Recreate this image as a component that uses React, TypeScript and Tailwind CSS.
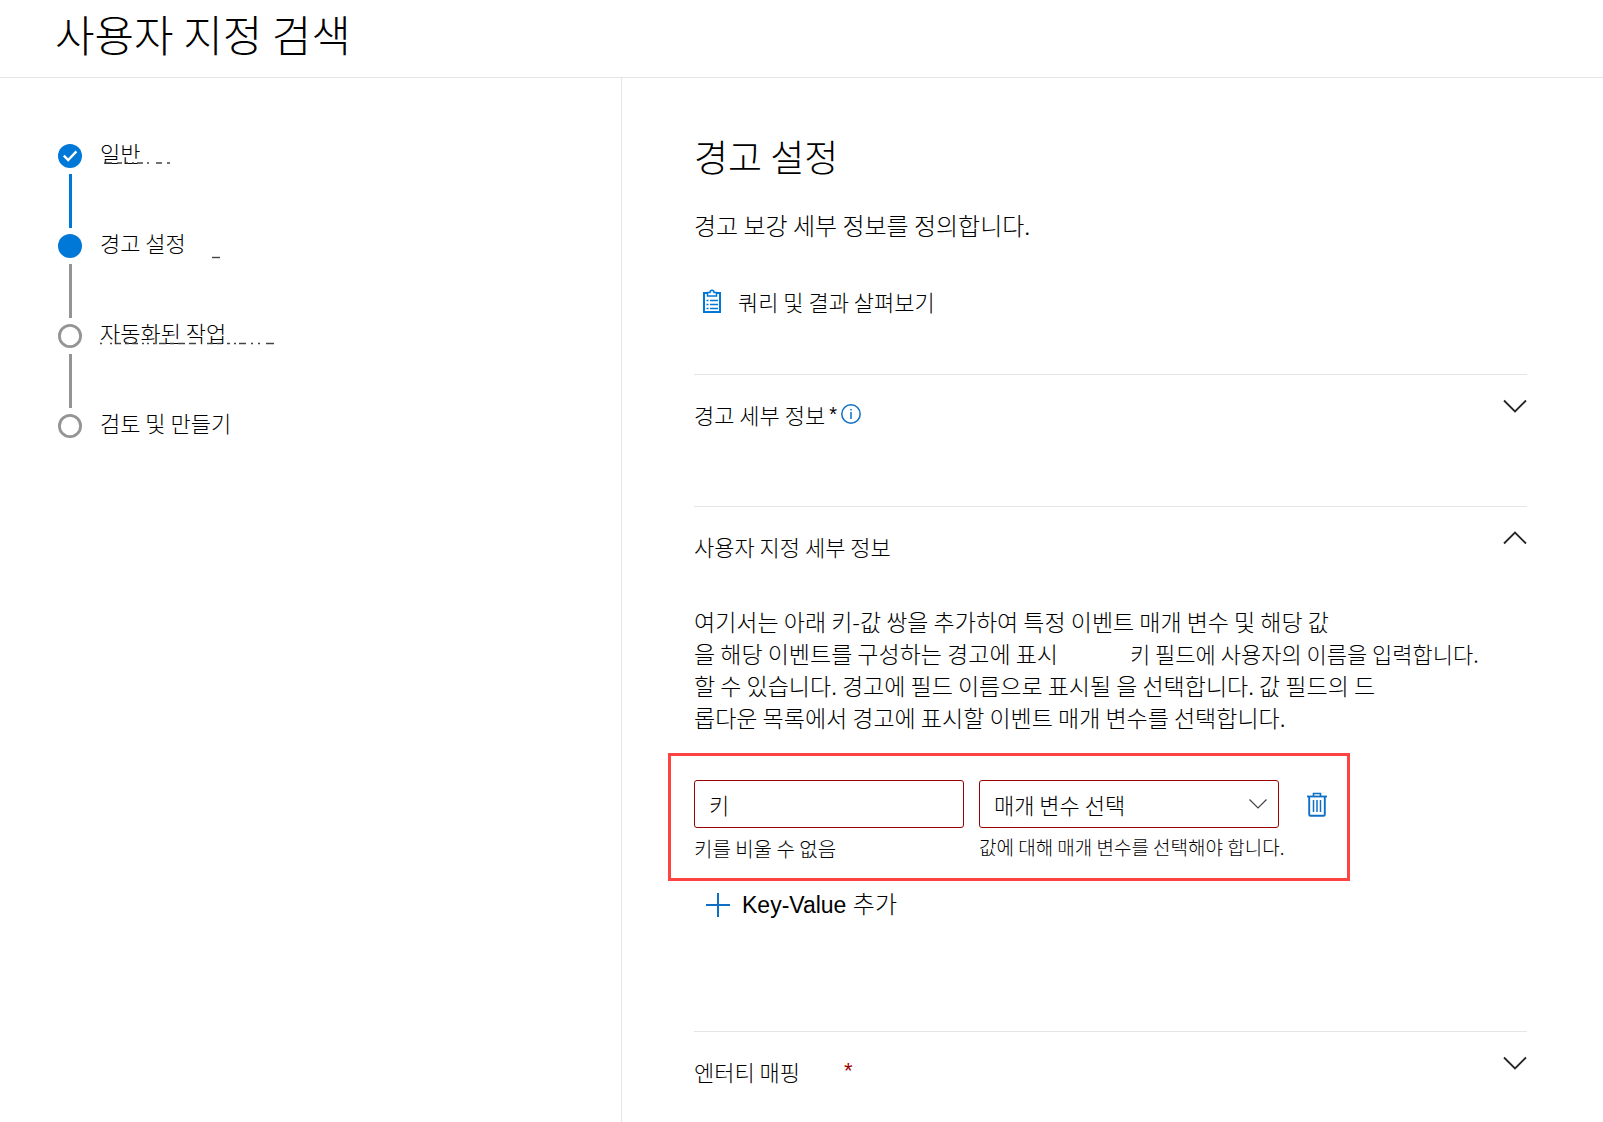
import { useState } from "react";
import type { ReactNode } from "react";

type StepState = "done" | "current" | "todo"

// marks: small strokes drawn under a label, relative to its top left corner
const steps: { label: string, state: StepState, marks?: string }[] = [
  { label: "일반", state: "done", marks: "M4 19h8M17 19h5M26 19h2M32 19h2M37 19h6M47 19h2M56 19h6M67 19h3" },
  { label: "경고 설정", state: "current", marks: "M112 23.500h8" },
  { label: "자동화된 작업", state: "todo", marks: "M0 19.500h2M10 19.500h2M16 19.500h5M25 19.500h4M32 19.500h6M42 19.500h2M47 19.500h2M53 19.500h2M59 19.500h7M70 19.500h4M78 19.500h7M89 19.500h7M107 19.500h6M117 19.500h5M127 19.500h3M134 19.500h2M139 19.500h7M151 19.500h2M158 19.500h2M166 19.500h8" },
  { label: "검토 및 만들기", state: "todo" },
]

function StepMarker({ state }: { state: StepState }) {
  return (
    <svg width="24" height="24" viewBox="0 0 24 24" fill="none" aria-hidden="true">
      {state === "todo" ? (
        <circle cx="12" cy="12" r="10.6" stroke="#949494" strokeWidth="2.8" />
      ) : (
        <circle cx="12" cy="12" r="12" fill="#0078d7" />
      )}
      {state === "done" && <path d="M5.8 11.6 10.2 16 18.4 7.4" stroke="#fff" strokeWidth="2.4" />}
    </svg>
  )
}

function Chevron({ up = false }: { up?: boolean }) {
  return (
    <svg width="24" height="14" viewBox="0 0 24 14" fill="none" stroke="#262626" strokeWidth="1.8" aria-hidden="true">
      <path d={up ? "M1 12.5 12 1.5 23 12.5" : "M1 1.5 12 12.5 23 1.5"} />
    </svg>
  )
}

function ClipboardIcon() {
  return (
    <svg width="20" height="25" viewBox="0 0 20 25" fill="none" stroke="#0078d7" aria-hidden="true">
      <path d="M5 4H2v19h16V4h-3" strokeWidth="2" />
      <path d="M5.500 7V3.500H8C8 2 8.800 1.200 10 1.200S12 2 12 3.500h2.500V7z" strokeWidth="1.500" />
      <path d="M8 11.500h8M8 15.500h8M8 19.500h8" strokeWidth="1.500" />
      <path d="M4.500 11.500h2M4.500 15.500h2M4.500 19.500h2" strokeWidth="1.500" />
    </svg>
  )
}

function InfoIcon() {
  return (
    <svg width="20" height="20" viewBox="0 0 20 20" fill="none" stroke="#0f6fc5" aria-hidden="true">
      <circle cx="10" cy="10" r="9.2" strokeWidth="1.5" />
      <path d="M10 8v7M10 5v1.600" strokeWidth="1.500" />
    </svg>
  )
}

function TrashIcon() {
  return (
    <svg width="20" height="25" viewBox="0 0 20 25" fill="none" stroke="#0f6fc5" aria-hidden="true">
      <path d="M0 4.500h20" strokeWidth="1.800" />
      <path d="M6.500 4V1.500h7V4" strokeWidth="1.600" />
      <path d="M2.200 5v17.500c0 .8.500 1.300 1.300 1.300h13c.8 0 1.300-.5 1.300-1.300V5" strokeWidth="1.900" />
      <path d="M6.500 8v12M10 8v12M13.500 8v12" strokeWidth="1.500" />
    </svg>
  )
}

type SectionProps = {
  title: ReactNode,
  open?: boolean,
  className?: string,
  children?: ReactNode,
}

function Section({ title, open = false, className, children }: SectionProps) {
  return (
    <section className={className}>
      <button type="button" aria-expanded={open} className="flex w-full justify-between border-t border-[#e5e5e5] pt-6 text-left">
        <span className="flex items-center text-[22px] leading-[30px]">{title}</span>
        <Chevron up={open} />
      </button>
      {children}
    </section>
  )
}

export default function App() {

  const [key, setKey] = useState("")

  return (
    <div className="flex min-h-screen flex-col bg-white font-['Noto_Sans_CJK_KR',sans-serif] font-light text-black">
      <header className="border-b border-[#e5e5e5] pt-0.5 pb-3 pl-[55px]">
        <h1 className="text-[43px] leading-[63px] font-light">사용자 지정 검색</h1>
      </header>
      <div className="flex grow">
        <nav className="w-[622px] shrink-0 border-r border-[#e5e5e5] pt-[66px] pl-[58px]">
          <ol>
            {steps.map(({ label, state, marks }, i) => (
              <li key={label} className="flex h-[90px] gap-[18px]">
                <div className="flex flex-col items-center">
                  <StepMarker state={state} />
                  {i < steps.length - 1 && (
                    <div className={state === "done" ? "my-1.5 w-[3px] grow bg-[#0078d7]" : "my-1.5 w-[3px] grow bg-[#949494]"} />
                  )}
                </div>
                <div className="grid items-start">
                  <span className="col-start-1 row-start-1 text-[22px] leading-4">{label}</span>
                  {marks && (
                    <svg className="col-start-1 row-start-1" width="180" height="26" viewBox="0 0 180 26" stroke="#444" strokeWidth="1.4" aria-hidden="true">
                      <path d={marks} />
                    </svg>
                  )}
                </div>
              </li>
            ))}
          </ol>
        </nav>

        <main className="grow pt-[51px] pr-[76px] pl-[72px]">
          <h2 className="text-[37px] leading-[54px] font-light">경고 설정</h2>
          <p className="pt-[21px] text-2xl leading-[42px]">경고 보강 세부 정보를 정의합니다.</p>
          <button type="button" className="mt-[33px] flex items-center gap-4 pl-2 text-[22px] leading-[44px]">
            <ClipboardIcon />
            쿼리 및 결과 살펴보기
          </button>

          <Section
            className="mt-[51px] h-[132px]"
            title={<>경고 세부 정보<span className="mx-1 font-['Liberation_Sans',sans-serif] text-xl">*</span><InfoIcon /></>}
          />

          <Section className="h-[525px]" title="사용자 지정 세부 정보" open>
            <div className="pt-11 text-[23px] leading-8">
              <p>여기서는 아래 키-값 쌍을 추가하여 특정 이벤트 매개 변수 및 해당 값</p>
              <p className="flex gap-[72px]">
                <span>을 해당 이벤트를 구성하는 경고에 표시</span>
                <span className="text-[22px]">키 필드에 사용자의 이름을 입력합니다.</span>
              </p>
              <p>할 수 있습니다. 경고에 필드 이름으로 표시될 을 선택합니다. 값 필드의 드</p>
              <p>롭다운 목록에서 경고에 표시할 이벤트 매개 변수를 선택합니다.</p>
            </div>

            <div className="mt-5 -ml-[26px] flex h-32 w-[682px] gap-[15px] border-[3px] border-[#ff4343] pt-6 pl-[23px]">
              <div className="w-[270px]">
                <input
                  type="text"
                  aria-label="키"
                  placeholder="키"
                  value={key}
                  onChange={e => setKey(e.currentTarget.value)}
                  className="h-12 w-full rounded-[3px] border border-[#990000] px-3.5 text-[22px] placeholder:text-black"
                />
                <p className="pt-1.5 text-xl leading-[30px]">키를 비울 수 없음</p>
              </div>
              <div className="w-[311px]">
                <div className="grid w-[300px] items-center">
                  <select aria-label="매개 변수" className="col-start-1 row-start-1 h-12 w-full appearance-none rounded-[3px] border border-[#990000] px-3.5 text-[22px]">
                    <option>매개 변수 선택</option>
                  </select>
                  <svg className="pointer-events-none col-start-1 row-start-1 mr-3 justify-self-end" width="18" height="10" viewBox="0 0 18 10" fill="none" stroke="#444" strokeWidth="1.2" aria-hidden="true">
                    <path d="M.5.5 9 9 17.5.5" />
                  </svg>
                </div>
                <p className="pt-1 text-[19px] leading-[30px] whitespace-nowrap">값에 대해 매개 변수를 선택해야 합니다.</p>
              </div>
              <button type="button" aria-label="삭제" className="flex h-12 items-center pl-0.5">
                <TrashIcon />
              </button>
            </div>

            <button type="button" className="mt-1.5 ml-3 flex items-center gap-3 font-['Liberation_Sans','Noto_Sans_CJK_KR',sans-serif] text-[23px] leading-9">
              <svg width="24" height="24" viewBox="0 0 24 24" stroke="#0f6fc5" strokeWidth="2" aria-hidden="true">
                <path d="M12 0v24M0 12h24" />
              </svg>
              <span>Key-Value <span className="text-2xl leading-9">추가</span></span>
            </button>
          </Section>

          <Section
            title={<>엔터티 매핑<span className="ml-11 font-['Liberation_Sans',sans-serif] text-[#990000]">*</span></>}
          />
        </main>
      </div>
    </div>
  )
}
